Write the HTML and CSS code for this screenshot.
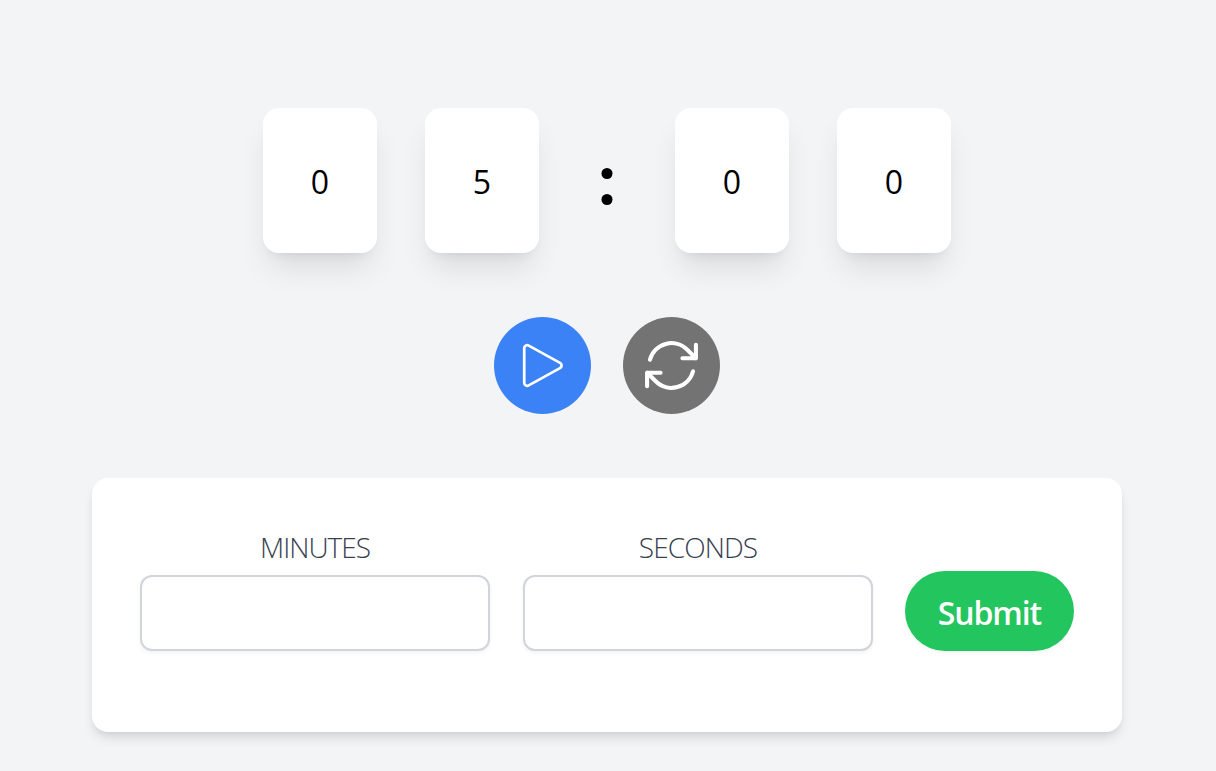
FILE: index.html
```html
<!DOCTYPE html>
<html lang="en">
<head>
<meta charset="utf-8">
<title>Timer</title>
<link rel="stylesheet" href="styles.css">
</head>
<body>
<main class="page">
  <section class="clock">
    <div class="digit"><span>0</span></div>
    <div class="digit"><span>5</span></div>
    <svg class="colon" viewBox="0 0 40 40" aria-label="colon"><circle cx="20" cy="6.5" r="5.5"/><circle cx="20" cy="32.5" r="5.5"/></svg>
    <div class="digit"><span>0</span></div>
    <div class="digit"><span>0</span></div>
  </section>
  <section class="controls">
    <button class="round play" type="button" aria-label="Start">
      <svg viewBox="0 0 24 24" stroke-width="1"><path d="M5.25 5.653c0-.856.917-1.398 1.667-.986l11.54 6.347a1.125 1.125 0 0 1 0 1.972l-11.54 6.347a1.125 1.125 0 0 1-1.667-.986V5.653Z"/></svg>
    </button>
    <button class="round reset" type="button" aria-label="Reset">
      <svg viewBox="0 0 24 24" stroke-width="1.5"><path d="M16.023 9.348h4.992v-.001M2.985 19.644v-4.992m0 0h4.992m-4.993 0 3.181 3.183a8.25 8.25 0 0 0 13.803-3.7M4.031 9.865a8.25 8.25 0 0 1 13.803-3.7l3.181 3.182m0-4.991v4.99"/></svg>
    </button>
  </section>
  <form class="panel">
    <div class="field">
      <label class="label" for="minutes"><span class="minutes">MINUTES</span></label>
      <input class="input" id="minutes" type="text">
    </div>
    <div class="field">
      <label class="label" for="seconds"><span class="seconds">SECONDS</span></label>
      <input class="input" id="seconds" type="text">
    </div>
    <button class="submit" type="button">Submit</button>
  </form>
</main>
</body>
</html>
```
FILE: styles.css
```css
* { box-sizing: border-box; }
body {
  margin: 0;
  background: #f3f4f6;
  font-family: "Open Sans", "Noto Sans", sans-serif;
}
.page {
  width: 1214px;
  height: 771px;
  padding-top: 108px;
  display: flex;
  flex-direction: column;
  align-items: center;
  overflow: hidden;
}
.clock { display: flex; gap: 48px; align-items: center; }
.digit {
  width: 114px;
  height: 145px;
  padding-top: 2px;
  display: flex;
  align-items: center;
  justify-content: center;
  background: #fff;
  border-radius: 16px;
  box-shadow: 0 20px 30px -6px rgba(0, 0, 0, .1), 0 8px 12px -8px rgba(0, 0, 0, .1);
  font-size: 32px;
  line-height: 48px;
  color: #000;
}
.colon { width: 40px; height: 40px; margin-top: 13px; }
.controls { display: flex; gap: 32px; margin-top: 64px; }
.round {
  width: 97px;
  height: 97px;
  padding: 0;
  border: 0;
  border-radius: 50%;
  display: flex;
  align-items: center;
  justify-content: center;
}
.round svg {
  width: 65px;
  height: 65px;
  fill: none;
  stroke: #fff;
  stroke-linecap: round;
  stroke-linejoin: round;
}
.play { background: #3b82f6; }
.reset { background: #737373; }
.panel {
  width: 1030px;
  height: 254px;
  margin-top: 64px;
  padding: 48px;
  display: flex;
  align-items: flex-start;
  background: #fff;
  border-radius: 16px;
  box-shadow: 0 8px 12px -2px rgba(0, 0, 0, .1), 0 4px 8px -4px rgba(0, 0, 0, .1);
}
.field { width: 350px; margin-right: 33px; display: flex; flex-direction: column; }
.field + .field { margin-right: 32px; }
.label {
  height: 49px;
  text-align: center;
  font-size: 28px;
  font-weight: 300;
  line-height: 42px;
  color: #374151;
}
.minutes { letter-spacing: -1px; }
.seconds { letter-spacing: -.9px; }
.input {
  width: 350px;
  height: 76px;
  padding: 0 24px;
  border: 2px solid #d1d5db;
  border-radius: 12px;
  background: #fff;
  box-shadow: 0 2px 4px rgba(0, 0, 0, .05);
  font: inherit;
  font-size: 28px;
}
.submit {
  width: 169px;
  height: 80px;
  margin-top: 45px;
  padding: 4px 0 0;
  border: 0;
  border-radius: 40px;
  background: #22c55e;
  box-shadow: 0 2px 4px rgba(0, 0, 0, .05);
  color: #fff;
  font-family: inherit;
  font-size: 32px;
  font-weight: 650;
  line-height: 48px;
  letter-spacing: -1.1px;
}
```
